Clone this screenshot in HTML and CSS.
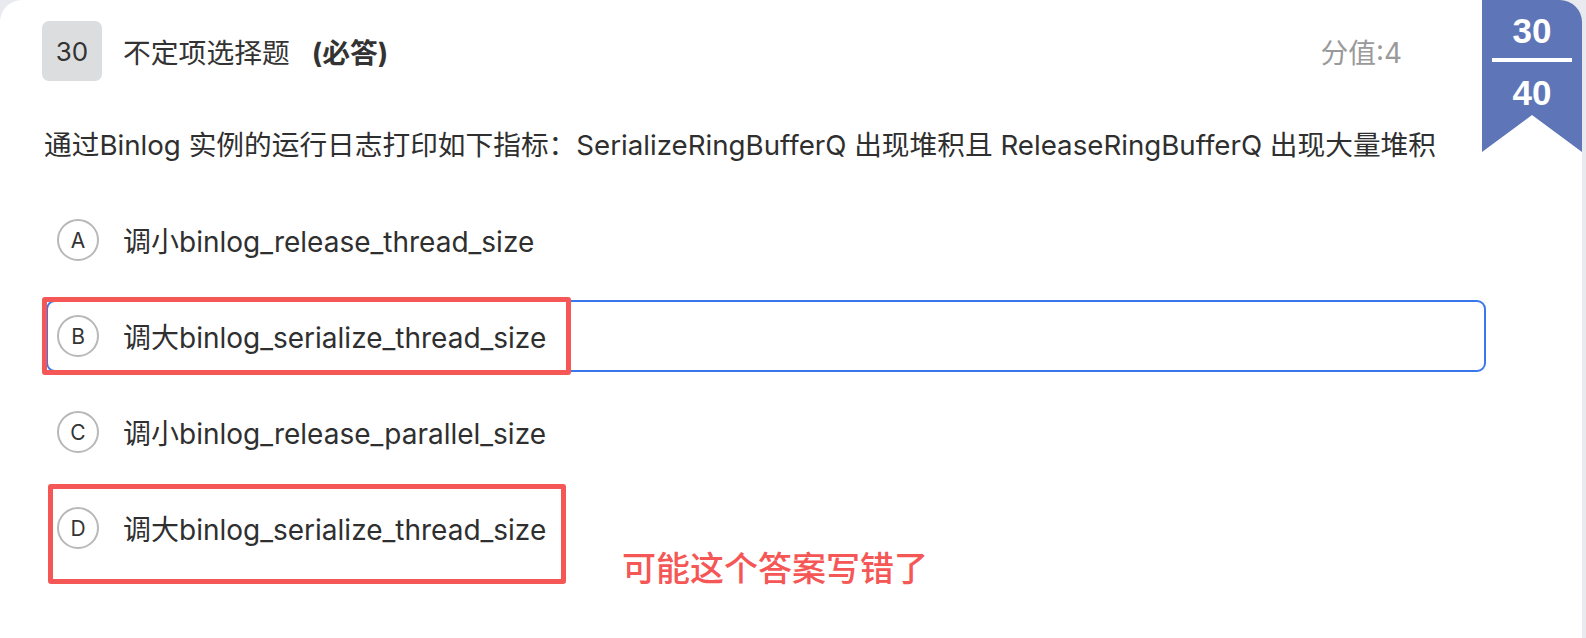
FILE: index.html
```html
<!DOCTYPE html>
<html lang="zh">
<head>
<meta charset="utf-8">
<link rel="stylesheet" href="styles.css">
</head>
<body>
<div class="card">
  <div class="ribbon">
    <span class="rb-num">30</span>
    <span class="rb-line"></span>
    <span class="rb-num">40</span>
  </div>
  <div class="header">
    <div class="qno">30</div>
    <div class="qtype">不定项选择题</div>
    <div class="must">(必答)</div>
    <div class="score">分值:4</div>
  </div>
  <div class="stem">通过Binlog 实例的运行日志打印如下指标：SerializeRingBufferQ 出现堆积且 ReleaseRingBufferQ 出现大量堆积</div>
  <div class="options">
    <div class="option"><span class="letter">A</span><span class="otext">调小binlog_release_thread_size</span></div>
    <div class="option selected"><span class="letter">B</span><span class="otext">调大binlog_serialize_thread_size</span></div>
    <div class="option"><span class="letter">C</span><span class="otext">调小binlog_release_parallel_size</span></div>
    <div class="option"><span class="letter">D</span><span class="otext">调大binlog_serialize_thread_size</span></div>
  </div>
  <div class="mark mark-b"></div>
  <div class="mark mark-d"></div>
  <div class="note">可能这个答案写错了</div>
</div>
</body>
</html>
```

FILE: styles.css
```css
* { box-sizing: border-box; }
html, body { margin: 0; padding: 0; }
body {
  background: #e8eaef;
  width: 1586px;
  height: 638px;
  overflow: hidden;
  font-family: Inter, "Noto Sans CJK SC", sans-serif;
  color: #2f2f2f;
}
.card {
  position: relative;
  width: 1582px;
  height: 638px;
  background: #ffffff;
  border-radius: 22px 22px 0 0;
  overflow: hidden;
  padding: 21px 0 0 42px;
}
.header {
  display: flex;
  align-items: center;
  height: 60px;
  font-size: 27.8px;
}
.qno {
  width: 60px;
  height: 60px;
  border-radius: 7px;
  background: #dcdddf;
  display: flex;
  align-items: center;
  justify-content: center;
  font-size: 26px;
  color: #333;
}
.qtype { margin-left: 21px; color: #333; }
.must { margin-left: 22px; font-weight: 700; color: #333; }
.score {
  margin-left: auto;
  margin-right: 180px;
  color: #9a9a9a;
}
.stem {
  margin-top: 44px;
  font-size: 27.7px;
  line-height: 40px;
  margin-left: 2px;
  color: #2f2f2f;
}
.options {
  margin-top: 39px;
  width: 1440px;
  margin-left: 4px;
  display: flex;
  flex-direction: column;
  gap: 24px;
}
.option {
  height: 72px;
  border: 2px solid transparent;
  border-radius: 9px;
  display: flex;
  align-items: center;
  padding-left: 9px;
}
.option.selected { border-color: #3a77ef; }
.letter {
  width: 42px;
  height: 42px;
  border: 2px solid #b8b8b8;
  border-radius: 50%;
  display: flex;
  align-items: center;
  justify-content: center;
  font-size: 21px;
  color: #333;
  flex: none;
}
.otext {
  margin-left: 24px;
  font-size: 28px;
  color: #2f2f2f;
}
.ribbon {
  position: absolute;
  top: 0;
  right: 0;
  width: 100px;
  height: 152px;
  background: #5e76b7;
  clip-path: polygon(0 0, 100% 0, 100% 100%, 50% 115px, 0 100%);
  display: flex;
  flex-direction: column;
  align-items: center;
  color: #fff;
  font-family: "Liberation Sans", Arial, sans-serif;
  font-weight: 700;
  padding-top: 12px;
}
.rb-num { font-size: 35px; line-height: 38px; }
.rb-line {
  width: 80px;
  height: 4px;
  background: #fff;
  margin: 8px 0 12px;
}
.mark {
  position: absolute;
  border: 5px solid #f55656;
  border-radius: 3px;
}
.mark-b { left: 42px; top: 297px; width: 529px; height: 78px; }
.mark-d { left: 48px; top: 484px; width: 518px; height: 100px; }
.note {
  position: absolute;
  left: 622px;
  top: 544px;
  font-size: 34px;
  line-height: 46px;
  font-weight: 500;
  color: #f55656;
  font-family: "Noto Sans CJK SC", sans-serif;
}
```
